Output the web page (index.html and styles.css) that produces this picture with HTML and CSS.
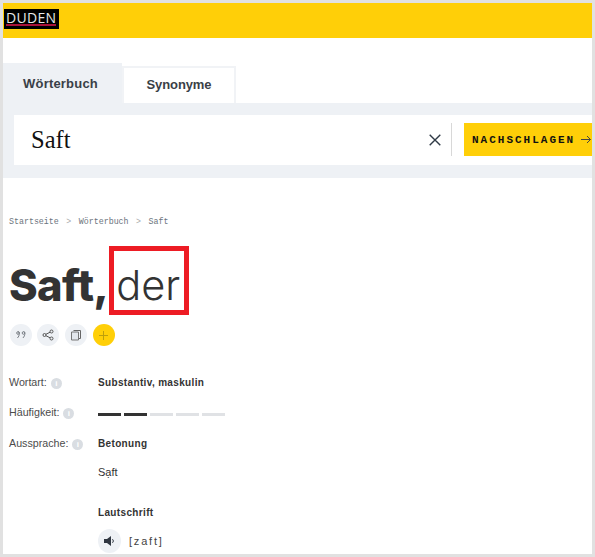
FILE: index.html
```html
<!DOCTYPE html>
<html lang="de">
<head>
<meta charset="utf-8">
<title>Saft, der – Duden</title>
<link rel="stylesheet" href="styles.css">
</head>
<body>
<div class="frame">
  <header class="topbar">
    <a class="logo"><span class="logo-text">DUDEN</span></a>
  </header>
  <nav class="tabs">
    <div class="tab tab-active">Wörterbuch</div>
    <div class="tab tab-other">Synonyme</div>
  </nav>
  <section class="searchband">
    <div class="searchbox">
      <span class="query">Saft</span>
      <svg class="clear" width="12" height="12" viewBox="0 0 12 12"><path d="M.7.7l10.6 10.6M11.3.7L.7 11.3" stroke="#2f3a46" stroke-width="1.4" fill="none"/></svg>
      <span class="divider"></span>
      <button class="go"><span>NACHSCHLAGEN</span>
        <svg width="10" height="9" viewBox="0 0 10 9"><path d="M0 4.5h9.5M6 1l3.5 3.5L6 8" stroke="#444" stroke-width="1" fill="none"/></svg>
      </button>
    </div>
  </section>
  <main class="content">
    <div class="crumbs"><span>Startseite</span><i>&gt;</i><span>Wörterbuch</span><i>&gt;</i><span>Saft</span></div>
    <h1 class="title"><b>Saft,</b><span class="article">der</span></h1>
    <div class="actions">
      <span class="circle"><svg width="10" height="8" viewBox="0 0 10 8"><g fill="none" stroke="#7b8087" stroke-width="1"><path d="M2 .7a1.4 1.4 0 0 1 1.4 1.5c0 2-.8 3.6-2 4.8"/><circle cx="2" cy="2" r="1.3"/><path d="M7.5.7a1.4 1.4 0 0 1 1.4 1.5c0 2-.8 3.6-2 4.8"/><circle cx="7.5" cy="2" r="1.3"/></g></svg></span>
      <span class="circle"><svg width="12" height="12" viewBox="0 0 12 12"><g fill="none" stroke="#555" stroke-width="1"><circle cx="2.5" cy="6" r="1.5"/><circle cx="9.5" cy="2.5" r="1.5"/><circle cx="9.5" cy="9.5" r="1.5"/><path d="M3.9 5.3l4.2-2.1M3.9 6.7l4.2 2.1"/></g></svg></span>
      <span class="circle"><svg width="12" height="12" viewBox="0 0 12 12"><path d="M3.5 1.5h7v8h-2" fill="none" stroke="#666" stroke-width="1"/><path d="M1.5 3h7v8h-7z" fill="#e3e7ec" stroke="#777" stroke-width="1"/></svg></span>
      <span class="circle circle-yellow"><svg width="9" height="9" viewBox="0 0 9 9"><path d="M4.5 0v9M0 4.5h9" stroke="#bd9f0c" stroke-width="1"/></svg></span>
    </div>
    <dl class="facts">
      <dt class="label label-art">Wortart: <span class="info">i</span></dt>
      <dd class="val row-art"><strong>Substantiv, maskulin</strong></dd>
      <dt class="label label-freq">Häufigkeit: <span class="info">i</span></dt>
      <dd class="val row-freq">
        <span class="bar on"></span><span class="bar on"></span><span class="bar"></span><span class="bar"></span><span class="bar"></span>
      </dd>
      <dt class="label">Aussprache: <span class="info">i</span></dt>
      <dd class="val row-speech">
        <strong>Betonung</strong>
        <p class="stress">Sạft</p>
        <strong class="lh">Lautschrift</strong>
        <div class="ipa">
          <span class="circle speaker"><svg width="11" height="10" viewBox="0 0 11 10"><path d="M0 3h3l4-3v10L3 7H0z" fill="#2f3640"/><path d="M8.5 3.2a2.5 2.5 0 0 1 0 3.6" stroke="#2f3640" fill="none"/></svg></span>
          <span class="phon">[zaft]</span>
        </div>
      </dd>
    </dl>
  </main>
</div>
</body>
</html>
```

FILE: styles.css
```css
* { box-sizing: border-box; }
html, body { margin: 0; height: 100%; }
body { background: #e1e1e1; padding: 3px; font-family: "Liberation Sans", Arial, sans-serif; color: #333; overflow: hidden; }
.frame { background: #fff; height: 551px; overflow: hidden; }

.topbar { height: 35px; background: #ffcf08; padding: 6px 0 0 1px; }
.logo { display: block; width: 55px; height: 20px; background: #000; padding: 2px 0 0 2px; }
.logo-text { display: block; width: 50px; height: 15px; color: #e8e8e8; font: 14px/14px "Open Sans", sans-serif; letter-spacing: .3px; border-bottom: 2px solid #a8123a; }

.tabs { display: flex; align-items: flex-end; margin-top: 25px; height: 40px; }
.tab { font: bold 13px/16px "Liberation Sans", sans-serif; color: #3a3f47; text-align: center; }
.tab-active { width: 119px; height: 40px; background: #eef1f5; padding: 13px 4px 0 0; letter-spacing: .2px; }
.tab-other { width: 114px; height: 37px; border: 2px solid #f1f3f6; border-bottom: 0; padding-top: 9px; letter-spacing: -.1px; }

.searchband { background: #eef1f5; height: 75px; padding: 12px 0 0 11px; }
.searchbox { background: #fff; height: 50px; display: flex; align-items: center; padding: 0 0 0 17px; }
.query { font: 24.5px/30px "Liberation Serif", serif; color: #111; flex: 1; }
.clear { margin-right: 10px; }
.divider { width: 1px; height: 33px; background: #d8d8d8; margin-right: 12px; margin-top: -1px; }
.go { width: 128px; height: 33px; margin-top: -1px; border: 0; background: #ffcf08; padding: 0 0 0 8px; display: flex; align-items: center; gap: 6px; font: bold 11px/12px "Liberation Mono", monospace; letter-spacing: 2px; color: #111; white-space: nowrap; }

.content { padding: 0 0 0 6px; }
.crumbs { margin-top: 38px; height: 12px; font: 8.3px/12px "Liberation Mono", monospace; color: #6b747d; display: flex; gap: 7.5px; }
.crumbs i { font-style: normal; color: #aaa; }

.title { margin: 18px 0 0; height: 69px; display: flex; align-items: center; font: 400 43.5px/59px "Inter", sans-serif; color: #333; }
.title b { font-weight: 800; letter-spacing: -.6px; padding-top: 10px; }
.article { width: 80px; height: 69px; margin-left: 1px; border: 5px solid #ed1c24; padding: 5px 0 0 2px; line-height: 59px; font-size: 41.5px; font-weight: 300; }

.actions { display: flex; gap: 5.33px; margin: 9px 0 0 1px; }
.circle { width: 22px; height: 22px; border-radius: 50%; background: #eef1f5; display: flex; align-items: center; justify-content: center; flex: none; }
.circle-yellow { background: #ffcf08; margin-left: 1px; }

.facts { display: grid; grid-template-columns: 89px 1fr; margin: 29px 0 0; }
.label { font-size: 10.7px; line-height: 14px; color: #4c4c4c; }
.val { margin: 0; line-height: 14px; font-size: 10px; padding-top: 1px; }
.val strong { display: block; font-weight: bold; letter-spacing: .35px; color: #333; }
.info { display: inline-block; width: 11px; height: 11px; margin-left: 1px; border-radius: 50%; background: #d9dde2; color: #fff; font: bold 8px/11px "Liberation Sans", sans-serif; text-align: center; vertical-align: 0; }
.row-art { height: 30px; }
.row-freq { height: 31px; display: flex; gap: 3px; padding-top: 8px; }
.bar { width: 23px; height: 3px; background: #e0e2e5; }
.bar.on { background: #333; }
.label-art { height: 30px; }
.stress { margin: 14px 0 27px; font-size: 11px; line-height: 14px; }
.ipa { display: flex; align-items: center; gap: 8px; margin-top: 9px; }
.speaker { width: 23px; height: 24px; }
.phon { font: 11px/14px "Liberation Sans", sans-serif; letter-spacing: 1.8px; color: #444; }
```
